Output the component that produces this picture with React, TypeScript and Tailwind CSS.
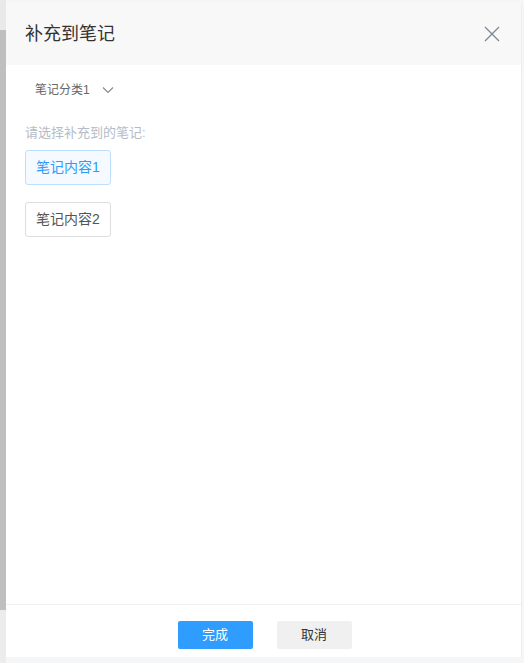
import React from "react";

export default function App() {
  return (
    <div
      className="w-[524px] h-[663px] bg-[#f5f6f8] flex overflow-hidden"
      style={{ fontFamily: '"Liberation Sans", "Noto Sans CJK SC", sans-serif' }}
    >
      <div className="w-[6px] h-full flex flex-col">
        <div className="h-[30px] bg-[#e9e9e9]" />
        <div className="flex-1 bg-[#bfbfbf]" />
        <div className="h-[53px] bg-[#ececec]" />
      </div>
      <div className="w-[516px] mt-[3px] mb-[6px] bg-white flex flex-col border-r border-[#eeeeee]">
        <div className="h-[62px] bg-[#f8f8f8] flex items-center justify-between pl-[19px] pr-[20px]">
          <span className="text-[18px] text-[#333333] leading-none">补充到笔记</span>
          <svg width="16" height="16" viewBox="0 0 16 16" className="mr-[1px]">
            <path d="M1 1L15 15M15 1L1 15" stroke="#7b8794" strokeWidth="1.3" fill="none" />
          </svg>
        </div>
        <div className="flex-1 flex flex-col px-[19px]">
          <div className="flex items-center mt-[17px] pl-[10px] h-[16px]">
            <span className="text-[12px] text-[#666666] leading-none">笔记分类1</span>
            <svg width="12" height="8" viewBox="0 0 12 8" className="ml-[12px]">
              <path d="M1 1.5L6 6.5L11 1.5" stroke="#888888" strokeWidth="1.1" fill="none" />
            </svg>
          </div>
          <div className="mt-[28px] text-[13px] text-[#b5bcc7] leading-none">请选择补充到的笔记:</div>
          <div className="mt-[11px] flex flex-col items-start gap-[17px]">
            <div className="w-[86px] h-[35px] border border-[#bcdffd] bg-[#f4faff] rounded-[3px] flex items-center justify-center text-[14px] text-[#2d9cfa]">
              笔记内容1
            </div>
            <div className="w-[86px] h-[35px] border border-[#dddddd] bg-white rounded-[3px] flex items-center justify-center text-[14px] text-[#555555]">
              笔记内容2
            </div>
          </div>
        </div>
        <div className="h-[53px] border-t border-[#f0f0f0] flex items-start justify-center gap-[24px] pt-[16px] pl-[2px]">
          <button className="w-[75px] h-[28px] bg-[#2e9dff] rounded-[2px] text-white text-[13px] flex items-center justify-center">
            完成
          </button>
          <button className="w-[75px] h-[28px] bg-[#f0f0f0] rounded-[2px] text-[#333333] text-[13px] flex items-center justify-center">
            取消
          </button>
        </div>
      </div>
    </div>
  );
}
